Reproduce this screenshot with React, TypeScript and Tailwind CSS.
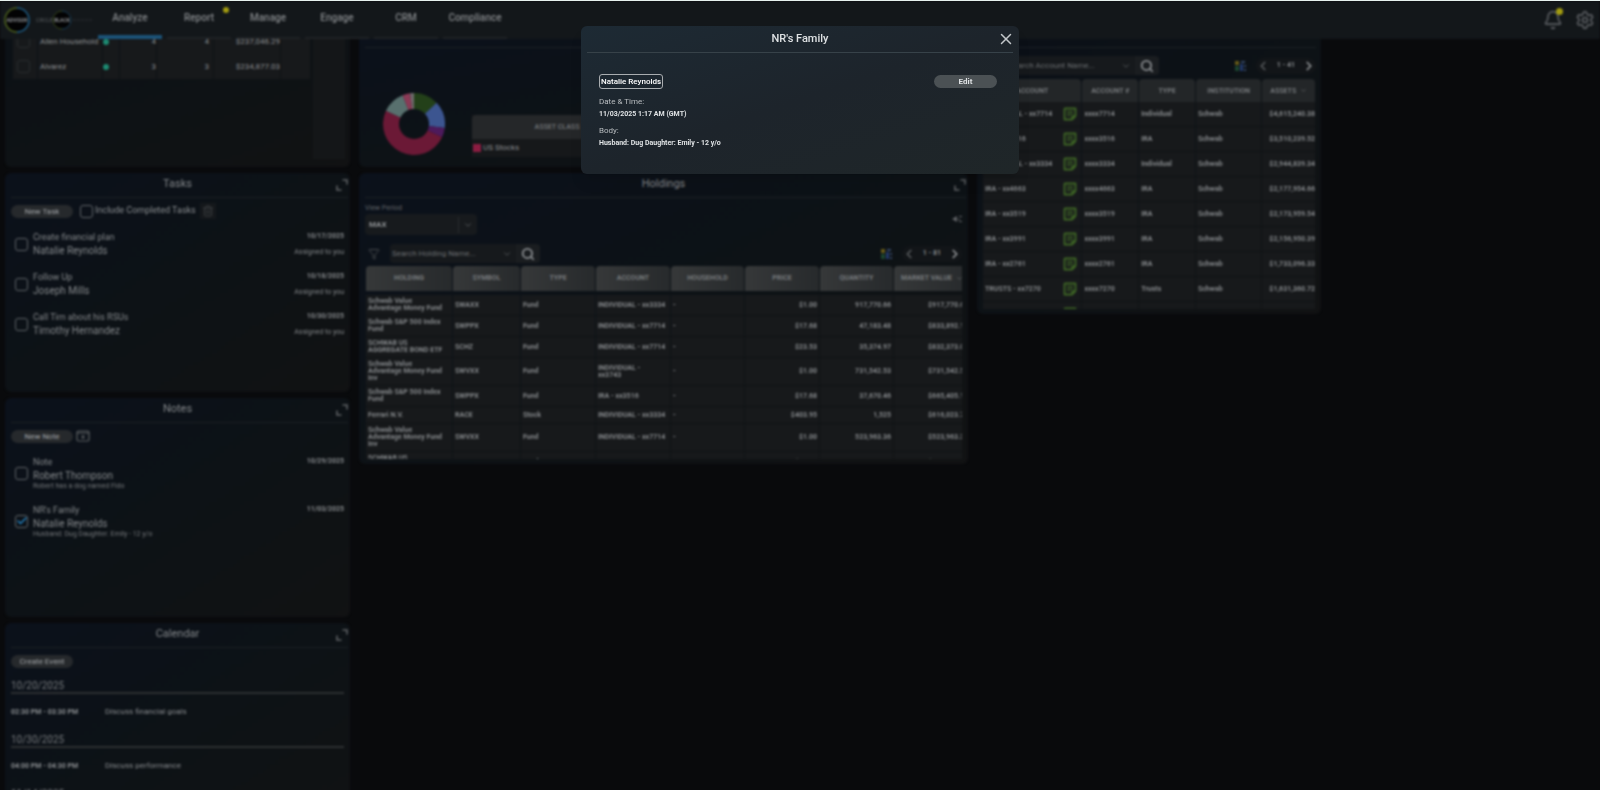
import { useState } from "react";
import type { ReactNode } from "react";
import {
  Bell,
  Check,
  ChevronDown,
  ChevronLeft,
  ChevronRight,
  Funnel,
  Search,
  Settings,
  Trash2,
  X,
} from "lucide-react";

const tabs = ["Analyze", "Report", "Manage", "Engage", "CRM", "Compliance"];

const households = [
  { name: "Allen Household", members: 4, accounts: 4, assets: "$237,046.29" },
  { name: "Alvarez", members: 3, accounts: 3, assets: "$234,877.03" },
];

const tasks = [
  { title: "Create financial plan", client: "Natalie Reynolds", date: "10/17/2025" },
  { title: "Follow Up", client: "Joseph Mills", date: "10/18/2025" },
  { title: "Call Tim about his RSUs", client: "Timothy Hernandez", date: "10/30/2025" },
];

const notes = [
  { title: "Note", client: "Robert Thompson", body: "Robert has a dog named Fido", date: "10/29/2025", done: false },
  { title: "NR's Family", client: "Natalie Reynolds", body: "Husband: Dug Daughter: Emily - 12 y/o", date: "11/03/2025", done: true },
];

const events = [
  { date: "10/20/2025", time: "02:30 PM - 03:30 PM", title: "Discuss financial goals" },
  { date: "10/30/2025", time: "04:00 PM - 04:30 PM", title: "Discuss performance" },
  { date: "11/14/2025", time: "01:00 PM - 01:30 PM", title: "Annual review" },
];

const holdings = [
  ["Schwab Value\nAdvantage Money Fund", "SWAXX", "Fund", "INDIVIDUAL - xx3334", "-", "$1.00", "917,770.66", "$917,770.66"],
  ["Schwab S&P 500 Index\nFund", "SWPPX", "Fund", "INDIVIDUAL - xx7714", "-", "$17.68", "47,183.48", "$833,892.10"],
  ["SCHWAB US\nAGGREGATE BOND ETF", "SCHZ", "Fund", "INDIVIDUAL - xx7714", "-", "$23.53", "35,374.97", "$832,373.04"],
  ["Schwab Value\nAdvantage Money Fund\nInv", "SWVXX", "Fund", "INDIVIDUAL -\nxx3743", "-", "$1.00", "731,542.53", "$731,542.53"],
  ["Schwab S&P 500 Index\nFund", "SWPPX", "Fund", "IRA - xx3516", "-", "$17.68", "37,670.46", "$665,405.12"],
  ["Ferrari N.V.", "RACE", "Stock", "INDIVIDUAL - xx3334", "-", "$403.95", "1,525", "$616,023.75"],
  ["Schwab Value\nAdvantage Money Fund\nInv", "SWVXX", "Fund", "INDIVIDUAL - xx7714", "-", "$1.00", "523,963.36", "$523,963.36"],
  ["SCHWAB US\nAGGREGATE BOND ETF", "SCHZ", "Fund", "IRA - xx4663", "-", "$23.53", "20,110.42", "$473,198.18"],
];

const holdingColumns = [
  { label: "HOLDING", width: "w-[86px]" },
  { label: "SYMBOL", width: "w-[67px]" },
  { label: "TYPE", width: "w-[74px]" },
  { label: "ACCOUNT", width: "w-[74px]" },
  { label: "HOUSEHOLD", width: "w-[73px]" },
  { label: "PRICE", width: "w-[74px]" },
  { label: "QUANTITY", width: "w-[73px]" },
  { label: "MARKET VALUE", width: "w-[76px]" },
];

const accounts = [
  ["INDIVIDUAL - xx7714", "xxxx7714", "Individual", "Schwab", "$4,615,240.38"],
  ["IRA - xx3516", "xxxx3516", "IRA", "Schwab", "$3,510,239.52"],
  ["INDIVIDUAL - xx3334", "xxxx3334", "Individual", "Schwab", "$2,944,839.34"],
  ["IRA - xx4663", "xxxx4663", "IRA", "Schwab", "$2,177,954.66"],
  ["IRA - xx3519", "xxxx3519", "IRA", "Schwab", "$2,173,959.54"],
  ["IRA - xx3991", "xxxx3991", "IRA", "Schwab", "$2,156,950.39"],
  ["IRA - xx2761", "xxxx2761", "IRA", "Schwab", "$1,733,096.33"],
  ["TRUSTS - xx7270", "xxxx7270", "Trusts", "Schwab", "$1,631,360.72"],
  ["IRA - xx8150", "xxxx8150", "IRA", "Schwab", "$1,502,118.20"],
];

const accountColumns = [
  { label: "ACCOUNT", width: "w-[30%]" },
  { label: "ACCOUNT #", width: "w-[17%]" },
  { label: "TYPE", width: "w-[17%]" },
  { label: "INSTITUTION", width: "w-[20%]" },
  { label: "ASSETS", width: "w-[16%]" },
];

const slices = [
  { color: "#234019", from: 0, to: 0.13 },
  { color: "#3c5590", from: 0.13, to: 0.27 },
  { color: "#4d1a5c", from: 0.27, to: 0.32 },
  { color: "#6b1936", from: 0.32, to: 0.82 },
  { color: "#58706e", from: 0.82, to: 0.94 },
  { color: "#8b3a56", from: 0.94, to: 0.98 },
  { color: "#6f6a6c", from: 0.98, to: 1 },
];

const ExpandIcon = () => (
  <svg viewBox="0 0 12 12" className="size-3" fill="none" stroke="currentColor" strokeWidth="1.600">
    <path d="M6.500 1H11v4.500M1 6.500V11h4.500" />
  </svg>
);

const ColumnsIcon = () => (
  <svg viewBox="0 0 12 12" className="size-3">
    <path d="M1 1h4v4H1z" fill="#655a18" />
    <path d="M1 6h4v5H1z" fill="#1b432e" />
    <path d="M6 4h3v7H6z" fill="#22386a" />
    <path d="M7 1h4v2H7zM10 5h2v2h-2zM10 9h2v2h-2z" fill="#334562" />
  </svg>
);

const AddNoteIcon = () => (
  <svg viewBox="0 0 14 12" className="h-3 w-3.5" fill="none" stroke="currentColor" strokeWidth="1.200">
    <rect x="1" y="1" width="12" height="10" rx="1.500" />
    <path d="M1 3h12M7 5v4M5 7h4" />
  </svg>
);

const NoteIcon = () => (
  <svg viewBox="0 0 14 14" className="size-[14px]" fill="none" stroke="#3e6525">
    <path d="M2 1.500h10.500V9L9 12.500H1.500V2z" strokeWidth="1.800" strokeLinejoin="round" />
    <path d="M12.500 9H9v3.500" strokeWidth="1.400" />
    <path d="M4 4.500h6M4 6.500h6M4 8.500h3.500" strokeWidth="1" />
  </svg>
);

const Logo = () => (
  <svg viewBox="0 0 26 28" className="h-7 w-[26px]">
    <circle cx="13" cy="14" r="12" fill="#030304" />
    <path d="M13 2a12 12 0 0 0 0 24" fill="none" stroke="#4f6420" strokeWidth="1.500" />
    <path d="M13 2a12 12 0 0 1 0 24" fill="none" stroke="#1f5d85" strokeWidth="1.500" />
    <text x="13" y="16" textAnchor="middle" fontSize="5" fontWeight="700" fill="#8c8f92">
      ADVISOR
    </text>
  </svg>
);

const BrandLogo = () => (
  <svg viewBox="0 0 58 22" className="h-[22px] w-[58px]">
    <text x="0" y="13" fontSize="5" fill="#5a5d60">CIRCLE</text>
    <circle cx="26" cy="11" r="9" fill="#030304" />
    <path d="M26 2a9 9 0 0 0 0 18" fill="none" stroke="#39491c" />
    <path d="M26 2a9 9 0 0 1 0 18" fill="none" stroke="#1c3f58" />
    <text x="26" y="13" textAnchor="middle" fontSize="5" fontWeight="700" fill="#8c8f92">BLACK</text>
    <path d="M37 11h20" stroke="#2c2f32" strokeDasharray="3 1" />
  </svg>
);

const Donut = () => {
  const point = (t: number, r: number) =>
    `${31 + r * Math.sin(t * 2 * Math.PI)} ${31 - r * Math.cos(t * 2 * Math.PI)}`;
  return (
    <svg viewBox="0 0 62 62" className="size-[62px] shrink-0">
      {slices.map(({ color, from, to }) => (
        <path
          key={color}
          fill={color}
          d={`M${point(from, 31)}A31 31 0 0 1 ${point(to, 31)}L${point(to, 15)}A15 15 0 0 0 ${point(from, 15)}Z`}
        />
      ))}
    </svg>
  );
};

const Tick = ({ label, checked = false, faint = false }: { label: string; checked?: boolean; faint?: boolean }) => (
  <span className="grid size-[13px] shrink-0 place-items-center">
    <input
      type="checkbox"
      aria-label={label}
      defaultChecked={checked}
      className={`peer col-start-1 row-start-1 size-[13px] appearance-none rounded-[3px] border ${
        faint ? "border-[#292c2e]" : "border-[#5d6266]"
      }`}
    />
    <Check className="pointer-events-none invisible col-start-1 row-start-1 size-3 text-[#2380bd] peer-checked:visible" strokeWidth={3} />
  </span>
);

const PillButton = ({ children }: { children: ReactNode }) => (
  <button className="h-[13px] w-[62px] rounded-full bg-[#26292c] text-[8px] leading-[13px] text-[#a4a7aa]">
    {children}
  </button>
);

const Card = ({ title, className, children }: { title: string; className: string; children: ReactNode }) => (
  <section
    className={`overflow-hidden rounded-md bg-linear-to-br from-[#0b111b] via-[#0d1216] to-[#111213] ${className}`}
  >
    <header className="mr-[2px] ml-[6px] grid h-[25px] grid-cols-[12px_1fr_12px] items-center border-b border-[#1b2024]">
      <span />
      <h2 className="pr-1 pb-0.5 text-center text-[11px] text-[#85888b]">{title}</h2>
      <button aria-label={`Expand ${title}`} className="text-[#5d6063]">
        <ExpandIcon />
      </button>
    </header>
    <div className="px-[6px]">{children}</div>
  </section>
);

const SearchBox = ({ label, className }: { label: string; className: string }) => (
  <div className={`flex h-[19px] items-center rounded bg-[#16191c] pl-0.5 ${className}`}>
    <input
      aria-label={label}
      placeholder={label}
      className="min-w-0 flex-1 bg-transparent text-[8px] text-[#8a8d90] outline-none placeholder:text-[#6c6f72]"
    />
    <ChevronDown className="mr-1 size-[10px] text-[#5d6063]" />
    <button aria-label="Search" className="grid h-full w-6 place-items-center rounded-r bg-[#1a1d20] text-[#8a8d90]">
      <Search className="size-[14px]" strokeWidth={3} />
    </button>
  </div>
);

const Pager = ({ range }: { range: string }) => (
  <div className="flex h-4 w-[60px] items-center justify-between rounded-full bg-[#121518] text-[7px] font-bold text-[#85888b]">
    <button aria-label="Previous page"><ChevronLeft className="size-[14px] text-[#55585b]" strokeWidth={3} /></button>
    {range}
    <button aria-label="Next page"><ChevronRight className="size-[14px] text-[#8f9295]" strokeWidth={3} /></button>
  </div>
);

const Header = () => (
  <header className="relative z-10 flex h-[38px] shrink-0 items-center bg-[#13171a] pr-[5px] pl-1">
    <Logo />
    <div className="ml-1.5">
      <BrandLogo />
    </div>
    <nav className="ml-1 flex gap-[5px] self-stretch">
      {tabs.map((tab, i) => (
        <a
          key={tab}
          href="#"
          className={`relative flex w-16 justify-center pt-[9px] text-[10px] leading-4 font-medium text-[#85888b] ${
            i === 0 ? "border-b-4 border-[#1c5378]" : "border-b-2 border-[#1f2225]"
          }`}
        >
          {tab}
          {tab === "Report" && <span className="absolute top-1.5 right-0.5 size-1.5 rounded-full bg-[#a39c10]" />}
        </a>
      ))}
    </nav>
    <div className="ml-auto flex gap-3 text-[#5a5d61]">
      <button aria-label="Notifications" className="relative">
        <Bell className="size-5" />
        <span className="absolute -top-0.5 right-0 size-[7px] rounded-full bg-[#a39c10]" />
      </button>
      <button aria-label="Settings">
        <Settings className="size-5" />
      </button>
    </div>
  </header>
);

const Households = () => (
  <section className="flex h-32 items-start gap-0.5 overflow-hidden rounded-b-md bg-linear-to-br from-[#0c1116] via-[#0e1215] to-[#111213] pr-[5px] pl-[7px]">
    {/* list is scrolled part-way under the header */}
    <table className="-mt-2.5 flex-1 border-separate border-spacing-x-px border-spacing-y-0 text-[8px] text-[#8c8f92]">
      <tbody>
        {households.map((row) => (
          <tr key={row.name} className="h-[25px] bg-[#17191b]">
            <td className="w-6 pl-1"><Tick label={row.name} faint /></td>
            <td className="w-16 pl-0.5">{row.name}</td>
            <td className="w-4"><span className="block size-1.5 rounded-full bg-[#1d8a72]" /></td>
            <td className="w-9 text-right">{row.members}</td>
            <td className="w-14 pr-1 text-right">{row.accounts}</td>
            <td className="w-[66px] text-right">{row.assets}</td>
            <td />
          </tr>
        ))}
      </tbody>
    </table>
    <div className="h-[120px] w-8 bg-[#141618]" />
  </section>
);

const Allocation = () => (
  <section className="h-32 rounded-b-md bg-linear-to-br from-[#0b111b] via-[#0d1216] to-[#111213] px-[6px]">
    <div className="h-[9px] border-b border-[#1b2024]" />
    <div className="flex pt-[45px] pl-[18px]">
      <Donut />
      <table className="mt-[22px] ml-[27px] flex-1 self-start bg-[#16181a] text-[8px] text-[#8c8f92]">
        <thead>
          <tr className="h-6 bg-[#252729] text-[7px]">
            <th className="w-[170px] rounded-tl font-bold text-[#6a6d70]">ASSET CLASS</th>
            <th className="font-bold text-[#6a6d70]">ALLOCATION</th>
          </tr>
        </thead>
        <tbody>
          <tr className="h-[18px]">
            <td>
              <span className="flex items-center gap-0.5 pl-px">
                <span className="size-2 bg-[#8b1c41]" />
                US Stocks
              </span>
            </td>
            <td className="text-center">50%</td>
          </tr>
        </tbody>
      </table>
    </div>
  </section>
);

const Tasks = () => (
  <Card title="Tasks" className="h-[219px]">
    <div className="flex h-[26px] items-center">
      <PillButton>New Task</PillButton>
      <label className="ml-[7px] flex items-center gap-0.5 text-[9px] text-[#8a8d90]">
        <Tick label="Include Completed Tasks" />
        Include Completed Tasks
      </label>
      <button aria-label="Delete" className="ml-1 grid size-4 place-items-center bg-[#15181b] text-[#3a3d40]">
        <Trash2 className="size-3" />
      </button>
    </div>
    <ul>
      {tasks.map((task) => (
        <li key={task.title} className="flex h-10 items-center gap-[5px] pl-1 text-[#85888b]">
          <Tick label={task.title} />
          <div className="flex-1">
            <p className="text-[9px] leading-[13px]">{task.title}</p>
            <p className="text-[10px] leading-[13px]">{task.client}</p>
          </div>
          <div className="text-right text-[7px]">
            <p className="leading-4 font-bold">{task.date}</p>
            <p className="leading-4">Assigned to you</p>
          </div>
        </li>
      ))}
    </ul>
  </Card>
);

const Notes = () => (
  <Card title="Notes" className="h-[219px]">
    <div className="flex h-[26px] items-center gap-[3px] text-[#5d6063]">
      <PillButton>New Note</PillButton>
      <button aria-label="Add from template">
        <AddNoteIcon />
      </button>
    </div>
    <ul>
      {notes.map((note) => (
        <li key={note.title} className="flex h-12 items-center gap-[5px] pl-1 text-[#85888b]">
          <Tick label={note.title} checked={note.done} />
          <div className="flex-1">
            <p className="text-[9px] leading-[13px]">{note.title}</p>
            <p className="text-[10px] leading-[13px]">{note.client}</p>
            <p className="text-[7px] leading-[9px] text-[#74777a]">{note.body}</p>
          </div>
          <p className="self-start pt-1.5 text-[7px] leading-[13px] font-bold">{note.date}</p>
        </li>
      ))}
    </ul>
  </Card>
);

const Calendar = () => (
  <Card title="Calendar" className="h-[219px]">
    <div className="flex h-[26px] items-center">
      <PillButton>Create Event</PillButton>
    </div>
    {events.map((event) => (
      <div key={event.date} className="h-[54px] pt-1.5">
        <h3 className="h-[14px] border-b-2 border-[#2c2f31] text-[10px] leading-[12px] text-[#75787b]">{event.date}</h3>
        <p className="flex items-center pt-2.5 text-[8px] leading-4 text-[#8a8d90]">
          <span className="w-[94px] text-[7px] font-bold">{event.time}</span>
          {event.title}
        </p>
      </div>
    ))}
  </Card>
);

const Holdings = () => (
  <Card title="Holdings" className="h-[291px]">
    <div className="flex items-center justify-between pt-[5px]">
      <label className="text-[7px] leading-[11px] text-[#606366]">
        View Period
        <span className="flex h-[21px] w-28 items-center rounded-sm bg-[#171a1d] pr-1">
          <select className="flex-1 appearance-none pl-1 text-[8px] font-bold text-[#8f9295] outline-none">
            <option>MAX</option>
            <option>YTD</option>
          </select>
          <span className="mr-1 h-4 w-px bg-[#292c2f]" />
          <ChevronDown className="size-[10px] text-[#5d6063]" />
        </span>
      </label>
      <button aria-label="Collapse" className="text-[#606366]">
        <svg viewBox="0 0 10 8" className="h-2 w-2.5" fill="currentColor">
          <path d="M0 4l5-3v6zM7 1h3v1H7zM6 4h2v1H6zM7 6h3v1H7z" />
        </svg>
      </button>
    </div>
    <div className="flex items-center pt-[9px] pb-[3px]">
      <Funnel className="ml-[3px] size-3 text-[#45484b]" />
      <SearchBox label="Search Holding Name..." className="ml-2.5 w-[150px]" />
      <span className="mr-2.5 ml-auto"><ColumnsIcon /></span>
      <Pager range="1 - 81" />
    </div>
    <div className="h-[193px] overflow-hidden">
      <table className="w-[606px] table-fixed border-separate border-spacing-x-px border-spacing-y-0 text-[7px] leading-[7px] text-[#85888b]">
        <thead>
          <tr className="h-[25px]">
            {holdingColumns.map(({ label, width }) => (
              <th
                key={label}
                className={`rounded-t bg-linear-to-r from-[#363839] to-[#272a2c] px-0 text-center font-bold whitespace-nowrap text-[#76797c] ${width}`}
              >
                {label}
                {label === "MARKET VALUE" && <ChevronDown className="ml-1 inline size-[7px]" />}
              </th>
            ))}
          </tr>
        </thead>
        <tbody>
          <tr className="h-1" aria-hidden="true">
            <td colSpan={8} />
          </tr>
          {holdings.map((row, r) => (
            <tr key={r} className="h-[17px]">
              {row.map((cell, c) => (
                <td
                  key={c}
                  className={`border-b border-[#0f1214] bg-[#17191b] py-[3px] font-bold whitespace-pre ${
                    c > 4 ? "pr-0.5 text-right" : "pl-0.5"
                  }`}
                >
                  {cell}
                </td>
              ))}
            </tr>
          ))}
        </tbody>
      </table>
    </div>
  </Card>
);

const Accounts = () => (
  <section className="h-[275px] rounded-b-md bg-linear-to-br from-[#0b1018] via-[#0d1216] to-[#111213] px-[5px]">
    <div className="h-[9px] border-b border-[#1b2024]" />
    <div className="flex h-[31px] items-center pt-1">
      <Funnel className="ml-[3px] size-3 text-[#45484b]" />
      <SearchBox label="Search Account Name..." className="ml-2.5 w-[152px]" />
      <span className="mr-2.5 ml-auto"><ColumnsIcon /></span>
      <Pager range="1 - 41" />
    </div>
    <div className="h-[230px] overflow-hidden">
      <table className="w-full table-fixed border-separate border-spacing-x-px border-spacing-y-0 text-[7px] leading-[8px] text-[#85888b]">
        <thead>
          <tr className="h-[23px]">
            {accountColumns.map(({ label, width }) => (
              <th key={label} className={`rounded-t bg-[#232628] text-center font-bold text-[#76797c] ${width}`}>
                {label}
                {label === "ASSETS" && <ChevronDown className="ml-1 inline size-[7px]" />}
              </th>
            ))}
          </tr>
        </thead>
        <tbody>
          {accounts.map((row) => (
            <tr key={row[1]} className="h-[25px]">
              {row.map((cell, c) => (
                <td
                  key={c}
                  className={`border-b border-[#0f1214] bg-[#17191b] font-bold whitespace-nowrap ${c === 4 ? "text-right" : "pl-0.5"}`}
                >
                  {c === 0 ? (
                    <span className="flex items-center justify-between pr-1">
                      {cell}
                      <NoteIcon />
                    </span>
                  ) : (
                    cell
                  )}
                </td>
              ))}
            </tr>
          ))}
        </tbody>
      </table>
    </div>
  </section>
);

const NoteDialog = ({ onClose }: { onClose: () => void }) => (
  <div className="fixed inset-0 z-50 flex items-start justify-center pt-[26px]">
    <div
      role="dialog"
      aria-labelledby="note-title"
      className="h-[148px] w-[438px] max-w-full rounded-md bg-linear-to-br from-[#1d2a34] via-[#1d242b] to-[#1f2628] px-1.5 text-[#dfe2e4] shadow-lg"
    >
      <header className="grid h-[27px] grid-cols-[16px_1fr_16px] items-center border-b border-[#374249]">
        <span />
        <h2 id="note-title" className="text-center text-[11px] font-medium">NR's Family</h2>
        <button aria-label="Close" onClick={onClose} className="text-[#c3c7ca]">
          <X className="size-[18px]" strokeWidth={2} />
        </button>
      </header>
      <div className="pt-[21px] pr-[16px] pl-3 text-[8px]">
        <div className="flex items-center justify-between">
          <a href="#" className="rounded-[3px] border border-[#a9adb0] px-px leading-[13px] font-medium text-white">
            Natalie Reynolds
          </a>
          <button className="h-[13px] w-[63px] rounded-full bg-[#4b5154] leading-[13px] font-bold">Edit</button>
        </div>
        <dl className="pt-[7px]">
          <dt className="leading-[12px] text-[#b9bdc0]">Date &amp; Time:</dt>
          <dd className="pb-[5px] text-[7px] leading-[12px] font-bold">11/03/2025 1:17 AM (GMT)</dd>
          <dt className="leading-[12px] text-[#b9bdc0]">Body:</dt>
          <dd className="text-[7px] leading-[13px] font-bold">Husband: Dug Daughter: Emily - 12 y/o</dd>
        </dl>
      </div>
    </div>
  </div>
);

export default function App() {
  const [open, setOpen] = useState(true);

  return (
    <div className="h-screen overflow-hidden border-t border-[#e6f1ee] bg-[#090a0c] font-['Roboto',sans-serif]">
      {/* Dashboard behind the dialog */}
      <div className={`flex h-full flex-col ${open ? "blur-[1px]" : ""}`}>
        <Header />
        <main className="grid grid-cols-[345fr_609fr_344fr_270fr] items-start gap-[9px] pl-[5px]">
          <div className="flex min-w-0 flex-col gap-1.5">
            <Households />
            <Tasks />
            <Notes />
            <Calendar />
          </div>
          <div className="flex min-w-0 flex-col gap-1.5">
            <Allocation />
            <Holdings />
          </div>
          <div className="min-w-0">
            <Accounts />
          </div>
        </main>
      </div>
      {open && <NoteDialog onClose={() => setOpen(false)} />}
    </div>
  );
}
